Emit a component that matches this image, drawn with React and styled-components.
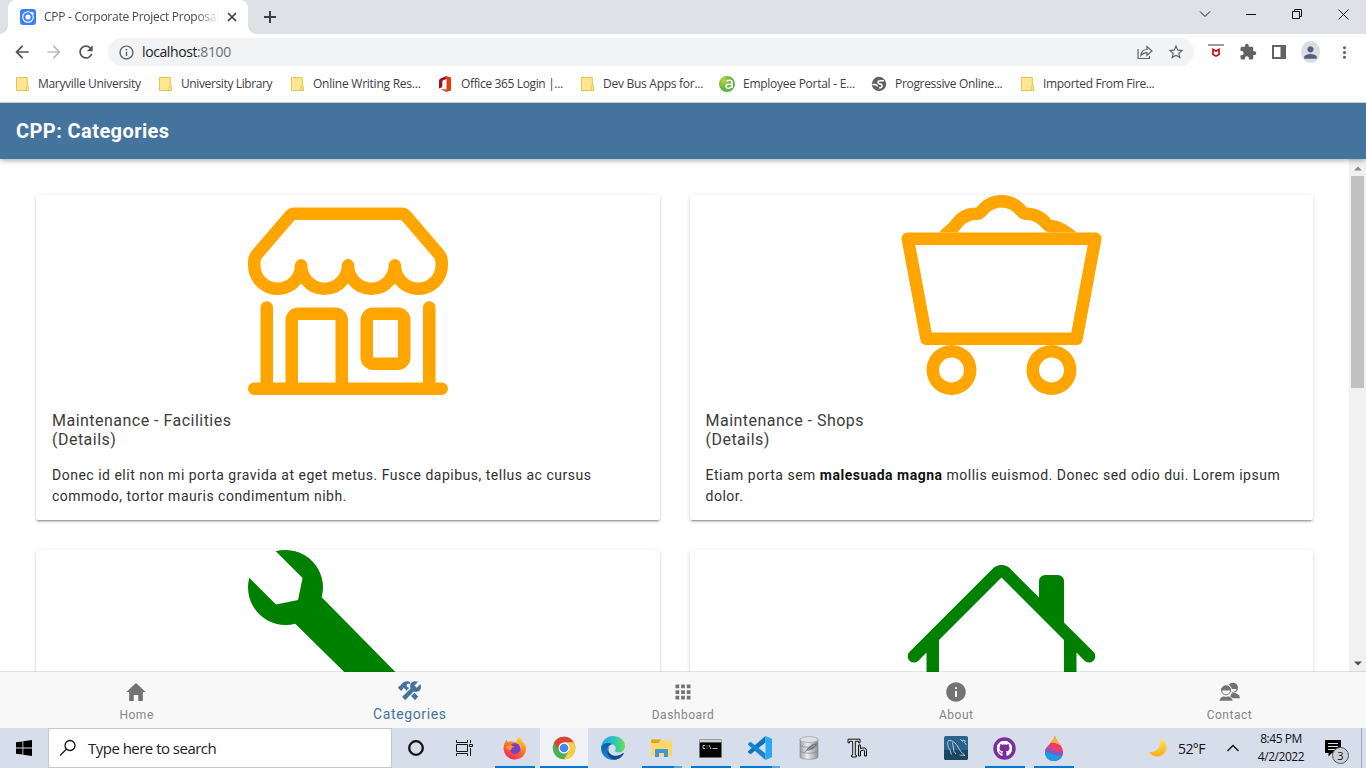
import React from "react";
import styled, { createGlobalStyle } from "styled-components";
import { BsShop, BsMinecartLoaded, BsWrench, BsHouse } from "react-icons/bs";
import { MdArrowBack, MdArrowForward, MdRefresh, MdInfoOutline, MdStarBorder, MdExtension, MdMoreVert, MdPerson } from "react-icons/md";
import { IoMdHome, IoMdApps, IoMdInformationCircle } from "react-icons/io";
import { IoConstructSharp } from "react-icons/io5";
import { FaGithub } from "react-icons/fa";

const Global = createGlobalStyle`
  *{box-sizing:border-box}
  html,body{margin:0;padding:0;height:100%;overflow:hidden}
  body{background:#fff;font-family:"Open Sans","Noto Sans",sans-serif}
  svg{display:block;flex:none}
`;

const Screen = styled.div`width:1366px;height:768px;display:flex;flex-direction:column;overflow:hidden;`;

/* Browser chrome */
const TabStrip = styled.div`height:34px;flex:none;display:flex;background:#dee1e6;padding-left:8px;`;
const Tab = styled.div`
  width:240px;height:34px;background:#fff;border-radius:8px 8px 0 0;display:flex;align-items:center;padding-left:12px;position:relative;
  &::before,&::after{content:"";position:absolute;bottom:0;width:8px;height:8px;}
  &::before{left:-8px;background:radial-gradient(circle at 0 0,transparent 7.5px,#fff 8px);}
  &::after{right:-8px;background:radial-gradient(circle at 100% 0,transparent 7.5px,#fff 8px);}
`;
const TabTitle = styled.div`
  width:174px;margin-left:8px;padding-bottom:1px;overflow:hidden;white-space:nowrap;font-size:12px;letter-spacing:-0.27px;color:#45474b;
  mask-image:linear-gradient(90deg,#000 152px,transparent 176px);
`;
const TabClose = styled.div`margin-left:9px;`;
const NewTab = styled.div`display:flex;align-items:center;margin-left:15px;`;
const WindowButtons = styled.div`margin-left:auto;display:flex;align-items:center;height:28px;`;
const WindowButton = styled.div`width:46px;display:flex;justify-content:center;`;

const Toolbar = styled.div`height:36px;flex:none;display:flex;align-items:center;padding:0 12px 0 14px;background:#fff;color:#5f6368;`;
const NavButton = styled.div`width:16px;margin-right:16px;display:flex;justify-content:center;color:${p => p.$off ? "#babcbe" : "#4f5256"};`;
const Omnibox = styled.div`flex:1;height:28px;border-radius:14px;background:#f1f3f4;display:flex;align-items:center;padding:0 9px 0 10px;margin-left:-2px;`;
const Url = styled.div`margin-left:7px;padding-bottom:1px;font-size:14px;letter-spacing:-0.4px;color:#202124;span{color:#6b6f73;}`;
const OmniActions = styled.div`margin-left:auto;display:flex;align-items:center;gap:14px;`;
const ToolActions = styled.div`display:flex;align-items:center;width:160px;padding-left:14px;gap:${p => p.$gap || 15}px;`;
const Avatar = styled.div`width:22px;height:22px;border-radius:50%;background:#dadde4;color:#56607a;display:flex;align-items:center;justify-content:center;`;
const MoreButton = styled.div`margin-left:auto;`;

const Bookmarks = styled.div`height:33px;flex:none;display:flex;padding:0 0 4px 16px;background:#fff;border-bottom:1px solid #d5d6d8;`;
const Bookmark = styled.div`width:${p => p.$w}px;display:flex;align-items:center;font-size:12px;color:#3c4043;white-space:nowrap;letter-spacing:${p => p.$ls}px;`;
const BookmarkIcon = styled.div`width:${p => p.$iw}px;display:flex;flex:none;`;
const BookmarkName = styled.span`padding-bottom:2px;`;

/* App */
const AppHeader = styled.header`
  height:56px;flex:none;background:#44739e;color:#fff;display:flex;align-items:center;padding-left:16px;z-index:1;
  font:700 20px Roboto,sans-serif;letter-spacing:.42px;
  box-shadow:0 2px 4px -1px rgba(0,0,0,.2),0 4px 5px 0 rgba(0,0,0,.06),0 1px 6px 0 rgba(0,0,0,.1);
`;
const Body = styled.div`flex:1;min-height:0;display:flex;`;
const Content = styled.main`flex:1;overflow:hidden;padding:36px;`;
const Cards = styled.div`display:grid;grid-template-columns:1fr 1fr;gap:29.6px 30px;`;
const Card = styled.article`
  height:325.4px;background:#fff;border-radius:2px;overflow:hidden;font-family:Roboto,sans-serif;
  box-shadow:0 3px 1px -2px rgba(0,0,0,.2),0 2px 2px 0 rgba(0,0,0,.14),0 1px 5px 0 rgba(0,0,0,.12);
`;
const CardArt = styled.div`height:200px;display:flex;justify-content:center;color:${p => p.$c};svg{overflow:visible;}path{transform:translateX(${p => p.$dx || 0}px);}`;
const CardTitle = styled.div`padding:16px;font-size:16px;line-height:19.2px;letter-spacing:.48px;color:#3c3c3c;`;
const CardText = styled.p`margin:0;padding:0 16px 13px;font-size:14px;line-height:21px;letter-spacing:.5px;color:#303030;b{font-weight:700;color:#111}`;
const Scrollbar = styled.div`width:17px;background:#f1f1f1;display:flex;flex-direction:column;align-items:center;justify-content:space-between;padding:7px 0 6px;`;
const ScrollTrack = styled.div`flex:1;width:13px;padding-top:5px;`;
const Thumb = styled.div`height:212px;background:#c1c1c1;`;
const AppTabs = styled.nav`height:56px;flex:none;display:flex;background:#f8f8f8;box-shadow:0 -1px 0 rgba(0,0,0,.1);z-index:1;font-family:Roboto,sans-serif;`;
const AppTab = styled.div`
  flex:1;display:flex;flex-direction:column;align-items:center;padding-top:${p => p.$on ? 7 : 8}px;color:${p => p.$on ? "#44739e" : "#737373"};
  svg{margin-right:1px;}
  span{font-size:${p => p.$on ? 14 : 12}px;line-height:16px;margin-top:${p => p.$on ? 4 : 3}px;letter-spacing:${p => p.$on ? .6 : .5}px;color:${p => p.$on ? "#44739e" : "#858585"};}
`;

/* Taskbar */
const Taskbar = styled.footer`height:40px;flex:none;background:#d7deeb;display:flex;align-items:stretch;`;
const Start = styled.div`width:48px;display:flex;align-items:center;justify-content:center;`;
const Search = styled.div`width:344px;background:#fff;border:1px solid #c5c7ca;display:flex;align-items:center;padding-left:10px;font-size:15px;letter-spacing:-.52px;color:#222;gap:11px;`;
const Task = styled.div`
  width:${p => p.$w || 49}px;display:flex;align-items:center;justify-content:center;position:relative;background:${p => p.$on ? "#eff1f7" : "transparent"};
  margin-left:${p => p.$ml || 0}px;
`;
const Running = styled.div`
  position:absolute;bottom:0;height:2px;left:${p => p.$full ? 0 : 4.5}px;right:${p => p.$full ? 0 : 4.5}px;
  background:${p => p.$stack ? "linear-gradient(90deg,#0078d7 32px,#5aa5e0 32px)" : "#0078d7"};
`;
const Tray = styled.div`margin-left:auto;display:flex;align-items:center;color:#111;`;
const Temp = styled.div`width:29px;margin:0 20px 0 10px;font-size:14px;letter-spacing:-.6px;white-space:nowrap;`;
const Clock = styled.div`width:60px;margin-left:12px;text-align:center;font-size:12px;line-height:18px;letter-spacing:-.45px;`;
const Notice = styled.div`position:relative;margin-left:14px;width:36px;height:40px;padding-top:12px;`;
const Count = styled.div`position:absolute;left:7px;top:19px;width:17px;height:17px;border-radius:50%;border:1px solid #555;background:#cdd0d6;font-size:11px;line-height:15px;text-align:center;`;
const ShowDesktop = styled.div`width:5px;height:40px;border-left:1px solid #a3a9b4;`;

const Folder = () => (
  <svg width="13" height="15" viewBox="0 0 13 15"><path d="M.5.5h10.800v8.800h1v4.200H.5z" fill="#ffe693" stroke="#e8c44c" /><path d="M10 13.500V10.500q0-1.200 1.200-1.200t1.200 1.200v3z" fill="#ffe693" stroke="#e8c44c" /></svg>
);
const Office = () => (
  <svg width="14" height="16" viewBox="0 0 14 16"><path d="M8.500 0L13 1.600v12.800L8.500 16z" fill="#e0400a" /><path d="M8.500 0L2.500 2.600Q1 3.400 1 5v6.500q0 1.200 1 .8l1.500-.7q.8-.4.800-1.300V5.500q0-1 .9-1.300L8.500 3z" fill="#9c1420" /><path d="M3 13.200l5.500 2.800v-2.800z" fill="#c33b3b" /></svg>
);
const Portal = () => (
  <svg width="16" height="16" viewBox="0 0 16 16"><defs><radialGradient id="pg" cx=".3" cy=".3"><stop offset="0" stopColor="#c9cf3c" /><stop offset="1" stopColor="#5cb544" /></radialGradient></defs><circle cx="8" cy="8" r="8" fill="url(#pg)" /><path d="M7.500 5q5-2 5.500 1v6M13 8.300c-4-.3-6 .4-6 2.200 0 2.600 5 2.300 6-.6" fill="none" stroke="#fff" strokeWidth="1.600" /></svg>
);
const Globe = () => (
  <svg width="16" height="16" viewBox="0 0 16 16"><circle cx="8" cy="8" r="7.200" fill="#5f6368" /><path d="M13 4.800H9.500C7.700 4.800 7 5.500 7 6.500s1 1.300 2.200 1.500 2 .8 1.800 2.200-1.400 1.800-3 1.500M1.500 8.500l3.500.3q1.500.3 1.200 1.800" fill="none" stroke="#fff" strokeWidth="1.500" /></svg>
);
const bookmarks = [
  { t: "Maryville University", w: 143, ls: -0.32, I: Folder },
  { t: "University Library", w: 132, ls: -0.38, I: Folder },
  { t: "Online Writing Res...", w: 147, ls: -0.24, I: Folder },
  { t: "Office 365 Login |...", w: 143, iw: 23, ls: -0.36, I: Office },
  { t: "Dev Bus Apps for...", w: 138, ls: -0.27, I: Folder },
  { t: "Employee Portal - E...", w: 152, iw: 24, ls: -0.26, I: Portal },
  { t: "Progressive Online...", w: 150, iw: 24, ls: -0.32, I: Globe },
  { t: "Imported From Fire...", w: 140, ls: -0.33, I: Folder },
];

const Favicon = () => (
  <svg width="16" height="16" viewBox="0 0 16 16"><rect width="16" height="16" rx="3" fill="#3880ff" /><circle cx="8" cy="8" r="5.300" fill="none" stroke="#fff" strokeWidth="1.100" /><circle cx="8" cy="8" r="2.600" fill="#fff" /><circle cx="12.200" cy="4.200" r="1.300" fill="#fff" /></svg>
);
const Stroke = ({ w = 16, h = 16, d, s = 1, c = "#111", fill = "none" }) => (
  <svg width={w} height={h} viewBox={`0 0 ${w} ${h}`}><path d={d} fill={fill} stroke={c} strokeWidth={s} /></svg>
);
const Contacts = () => (
  <svg width="24" height="24" viewBox="0 0 24 24">
    <circle cx="16" cy="7.800" r="5" fill="#737373" /><path d="M12 9h7.500q-.8 3-3.500 3.200z" fill="#f8f8f8" />
    <path d="M13 17l1.500-3.500 3.500-.8 4 2.300 1 3.200H16z" fill="#737373" />
    <circle cx="9" cy="10.300" r="6" fill="#f8f8f8" /><circle cx="9" cy="10.300" r="4.500" fill="#f8f8f8" stroke="#737373" strokeWidth="1" />
    <path d="M4 10.500C3.800 4 14.200 4 14 10.500z" fill="#737373" />
    <path d="M1.800 21L3.800 17.300l3-1.200q2.200 1 4.400 0l3 1.200 2 3.700z" fill="#737373" stroke="#f8f8f8" strokeWidth=".6" />
  </svg>
);

const Firefox = () => (
  <svg width="24" height="24" viewBox="0 0 24 24"><defs><linearGradient id="ff" x1=".8" y1="0" x2=".25" y2="1"><stop offset="0" stopColor="#ffe13d" /><stop offset=".45" stopColor="#ff7b26" /><stop offset="1" stopColor="#f5225d" /></linearGradient></defs>
    <path d="M16 .5c2.200 1.500 3 3.300 3.300 5 2.500 1.500 4.300 5 3.600 8.500C22 20 17.500 23.500 12 23.500S1.500 19.500.7 14C.1 9.600 1.700 6.300 4 3.500L4.300 6l3.500-.8C9.500 5 10.500 5.500 11 6l3-.5C14 3.500 14.700 2 16 .5z" fill="url(#ff)" />
    <circle cx="12" cy="12.500" r="5.500" fill="#7542c4" /><path d="M3 11c3-2.500 5.500-2.500 8.500 0-2.500.2-3.500 1.500-3.200 3.200-2.300 0-4.300-1-5.300-3.200z" fill="#ff9330" /><path d="M12 7c4 0 5.500 3 5 6 2-2 1.500-6-1-8z" fill="#ffb22e" /></svg>
);
const Chrome = () => (
  <svg width="24" height="24" viewBox="0 0 24 24"><circle cx="12" cy="12" r="11.300" fill="#4caf50" /><path d="M2.200 6.350A11.300 11.300 0 0 1 21.800 6.350H12L7.100 14.800z" fill="#db4437" /><path d="M21.800 6.350A11.300 11.300 0 0 1 12 23.300L16.900 14.800 12 6.350z" fill="#ffcd40" /><path d="M2.200 6.350L7.100 14.800 12 12z" fill="#db4437" /><circle cx="12" cy="12" r="5.500" fill="#fff" /><circle cx="12" cy="12" r="4.300" fill="#4285f4" /></svg>
);
const Edge = () => (
  <svg width="24" height="24" viewBox="0 0 24 24"><defs><linearGradient id="e1"><stop offset="0" stopColor="#249fe0" /><stop offset=".5" stopColor="#2cc1c5" /><stop offset="1" stopColor="#66df4d" /></linearGradient><linearGradient id="e2" x2="0" y2="1"><stop offset="0" stopColor="#0b5aa5" /><stop offset="1" stopColor="#1691e0" /></linearGradient></defs>
    <path d="M.1 11C1 4.500 6 0 12 0c7 0 12 4.500 12 10 0 4-3 6.500-6.500 6.500-3 0-4-1.300-3.300-2.300C16 11 13 8 9 8 5 8 1.500 9 .1 11z" fill="url(#e1)" /><path d="M.1 11C2 7.500 7 6 11 8c-3 1-5.200 4-4.500 8 .7 4 3.500 7 7.500 7.800C6 25-.7 19 .1 11z" fill="url(#e2)" /><path d="M10 9.500c-5 3-2.500 9.500 3.500 10.200 3.500.4 6.500-1 8.500-2.700.7-.3 1 .3.700.7-2 4-6 6.300-9.700 6C5 22 4 12 10 9.500z" fill="#114a8b" /></svg>
);
const Explorer = () => (
  <svg width="22" height="20" viewBox="0 0 22 20"><path d="M1 1.500h9v4H0V2.500q0-1 1-1z" fill="#e5a50a" /><path d="M9 2.500h11q1 0 1 1V18H0V5h8z" fill="#ffd869" /><path d="M4 19v-7q0-1 1-1h11q1 0 1 1v7h-4v-4H8v4z" fill="#3c97db" /></svg>
);
const Terminal = () => (
  <svg width="23" height="19" viewBox="0 0 23 19"><rect width="23" height="19" rx="1" fill="#9a9da0" /><rect x="1" y="1" width="21" height="2" fill="#d2d4d6" /><rect x=".7" y="3.500" width="21.600" height="14.800" fill="#050505" /><path d="M6 6.500H4v3h2M8 6.700v.8M8 8.700v.8M10 6l2 4M13.500 9.500h5" stroke="#eee" fill="none" strokeWidth=".8" /></svg>
);
const Code = () => (
  <svg width="24" height="24" viewBox="0 0 24 24"><path d="M17.500 0v6.600L2.500 18.300.3 16.500q-.7-.7 0-1.500z" fill="#0f72b8" /><path d="M17.500 24v-6.600L2.500 5.700.3 7.500q-.7.7 0 1.500z" fill="#1484cf" /><path d="M17.500 0L24 2.800v18.400L17.500 24z" fill="#29a9f2" /></svg>
);
const Database = () => (
  <svg width="20" height="24" viewBox="0 0 20 24"><defs><linearGradient id="db"><stop offset="0" stopColor="#9b9da3" /><stop offset=".4" stopColor="#eceef2" /><stop offset="1" stopColor="#8d9096" /></linearGradient></defs><path d="M1 3v18c0 3 18 3 18 0V3z" fill="url(#db)" stroke="#888" strokeWidth=".6" /><ellipse cx="10" cy="3.500" rx="9" ry="3" fill="#dcdfe4" stroke="#999" strokeWidth=".6" /><path d="M1 9c3 3 15 3 18 0M1 15c3 3 15 3 18 0" fill="none" stroke="#888" strokeWidth=".8" /><path d="M5 18.500C7 13 12 7.500 18.500 7 16 12.500 12 14.500 7.500 15z" fill="#6b6f75" /><path d="M4 19.500C8 15 12 11 16 9" fill="none" stroke="#e3e5e8" strokeWidth=".6" /></svg>
);
const Thonny = () => (
  <svg width="21" height="20" viewBox="0 0 21 20"><path d="M1 1.200h12v3.600h-1.500V3.300H8.300V17h1v2H4.700v-2h1V3.300H2.500v1.500H1z" fill="#e8e8e8" stroke="#111" strokeWidth="1" /><path d="M11.500 7h2v3.500q6-2 6 2V18h-2v-5q0-2-4 0v5h-2z" fill="#ccc" stroke="#111" strokeWidth="1" /></svg>
);
const MySQL = () => (
  <svg width="24" height="24" viewBox="0 0 24 24"><rect width="24" height="24" rx="2" fill="#2a638c" /><path d="M0 14h24v8q0 2-2 2H2q-2 0-2-2z" fill="#1d4461" /><path d="M7.500 18.500L6 14C4 11 3 7 4.500 4.500 8 4 12 7 14 11c2 4 4 6 7 8.500-3-.5-4 0-5.500-.5M8.500 6.500l1.500 9 2 2.500M16.500 3l2 2.500.5-1.500 2.500 1-1 1.500 2 2.500" fill="none" stroke="#c4d5e3" strokeWidth=".9" /></svg>
);
const Drop = () => (
  <svg width="20" height="25" viewBox="0 0 20 25"><defs><clipPath id="dr"><path d="M11 0c1 6 8 9 8 16 0 5-4 9-9 9s-9-4-9-9C1 10 9 7 11 0z" /></clipPath></defs><g clipPath="url(#dr)"><path d="M0 0h20v25H0z" fill="#e93e72" /><path d="M6 0h14v11C15 9 12 6 6 7z" fill="#fdb614" /><path d="M0 12c8-2 10 7 20 3v10H0z" fill="#7d5bc0" /><path d="M0 16c7-1 10 6 20 3v7H0z" fill="#199de5" /></g></svg>
);
const Moon = () => (
  <svg width="20" height="20" viewBox="0 0 20 20"><defs><linearGradient id="mo" x2="0" y2="1"><stop offset="0" stopColor="#ffe45c" /><stop offset="1" stopColor="#ffab0f" /></linearGradient></defs><path d="M11.500 1c5 1.200 8 5 7 9.800C17.300 17 11 20 5.500 17.800 3.500 17 2 15.800 1.200 14 9 15 13.500 8.500 11.500 1z" fill="url(#mo)" /></svg>
);
const GitHub = () => (
  <svg width="23" height="23" viewBox="0 0 23 23"><circle cx="11.500" cy="11.500" r="11.200" fill="#7b2d9e" /><FaGithub x="3.500" y="3.500" size={16} color="#fff" /></svg>
);

const cards = [
  { t: "Maintenance - Facilities", I: BsShop, c: "orange", x: "Donec id elit non mi porta gravida at eget metus. Fusce dapibus, tellus ac cursus commodo, tortor mauris condimentum nibh." },
  { t: "Maintenance - Shops", I: BsMinecartLoaded, c: "orange", dx: 0.04, x: <>Etiam porta sem <b>malesuada magna</b> mollis euismod. Donec sed odio dui. Lorem ipsum dolor.</> },
  { I: BsWrench, c: "green" },
  { I: BsHouse, c: "green", dx: 0.04 },
];
const appTabs = [
  { t: "Home", I: IoMdHome }, { t: "Categories", I: IoConstructSharp, on: true }, { t: "Dashboard", I: IoMdApps },
  { t: "About", I: IoMdInformationCircle }, { t: "Contact", I: Contacts },
];
const tasks = [
  { I: Firefox, run: true, ml: 2 }, { I: Chrome, run: true, on: true, w: 48, ml: 1 }, { I: Edge }, { I: Explorer, run: true, stack: true }, { I: Terminal, run: true },
  { I: Code, run: true, stack: true }, { I: Database }, { I: Thonny }, { I: MySQL, ml: 49 }, { I: GitHub, run: true }, { I: Drop, run: true },
];

export default function App() {
  return (
    <>
      <Global />
      <Screen>
        <TabStrip>
          <Tab>
            <Favicon />
            <TabTitle>CPP - Corporate Project Proposal</TabTitle>
            <TabClose><Stroke w={10} h={10} s={1.7} c="#3c4043" d="M1 1l8 8M9 1L1 9" /></TabClose>
          </Tab>
          <NewTab><Stroke w={14} h={14} s={2} c="#3c4043" d="M7 1v12M1 7h12" /></NewTab>
          <WindowButtons>
            <WindowButton><Stroke w={12} h={8} d="M1 1.500l5 5 5-5" /></WindowButton>
            <WindowButton><Stroke w={10} h={10} d="M0 5.500h10" /></WindowButton>
            <WindowButton><Stroke w={10} h={10} d="M.5 2.500h7v7h-7zM2.500 2.500v-2h7v7h-2" /></WindowButton>
            <WindowButton><Stroke w={11} h={11} d="M.5.5l10 10M10.500.5l-10 10" /></WindowButton>
          </WindowButtons>
        </TabStrip>
        <Toolbar>
          <NavButton><MdArrowBack size={20} /></NavButton>
          <NavButton $off><MdArrowForward size={20} /></NavButton>
          <NavButton><MdRefresh size={20} /></NavButton>
          <Omnibox>
            <MdInfoOutline size={17} />
            <Url>localhost<span>:8100</span></Url>
            <OmniActions>
              <Stroke w={16} h={16} s={1.2} c="#5f6368" d="M1 5v9.500h11.500V12M4 11.500c.3-4 2.500-6 6-6V2.500L15 7l-5 4.500V8.600c-3 0-4.500.9-6 2.900z" />
              <MdStarBorder size={18} />
            </OmniActions>
          </Omnibox>
          <ToolActions>
            <svg width="16" height="16" viewBox="0 0 16 16"><path d="M0 1h16" stroke="#9b9c9f" strokeWidth="2" /><path d="M5 5.500v5l3 1.500 3-1.500v-5L8 7z" fill="#fff" stroke="#c01818" strokeWidth="1.700" /></svg>
            <MdExtension size={18} />
            <svg width="14" height="14" viewBox="0 0 14 14"><path d="M1 1h12v12H1z" fill="#fff" stroke="#5f6368" strokeWidth="2" /><path d="M8.500 1H13v12H8.500z" fill="#5f6368" /></svg>
            <Avatar><MdPerson size={19} /></Avatar>
            <MoreButton><MdMoreVert size={19} /></MoreButton>
          </ToolActions>
        </Toolbar>
        <Bookmarks>
          {bookmarks.map(({ t, w, ls, iw, I }) => (
            <Bookmark key={t} $w={w} $ls={ls}><BookmarkIcon $iw={iw || 22}><I /></BookmarkIcon><BookmarkName>{t}</BookmarkName></Bookmark>
          ))}
        </Bookmarks>
        <AppHeader>CPP: Categories</AppHeader>
        <Body>
          <Content>
            <Cards>
              {cards.map(({ t, I, c, x, dx }, i) => (
                <Card key={i}>
                  <CardArt $c={c} $dx={dx}><I size={200} /></CardArt>
                  {t && <CardTitle>{t}<br />(Details)</CardTitle>}
                  {x && <CardText>{x}</CardText>}
                </Card>
              ))}
            </Cards>
          </Content>
          <Scrollbar>
            <Stroke w={8} h={5} c="none" fill="#8a8a8a" d="M0 4.500L4 .5l4 4z" />
            <ScrollTrack><Thumb /></ScrollTrack>
            <Stroke w={8} h={5} c="none" fill="#505050" d="M0 .5l4 4 4-4z" />
          </Scrollbar>
        </Body>
        <AppTabs>
          {appTabs.map(({ t, I, on }) => <AppTab key={t} $on={on}><I size={on ? 23 : 24} /><span>{t}</span></AppTab>)}
        </AppTabs>
        <Taskbar>
          <Start><svg width="16" height="16" viewBox="0 0 16 16"><path d="M0 2.300l6.500-.9v6.200H0zM7.300 1.200L16 0v7.600H7.300zM0 8.400h6.500v6.200L0 13.700zM7.300 8.400H16V16l-8.700-1.200z" /></svg></Start>
          <Search><Stroke w={18} h={18} s={1.3} d="M16 6.500a5 5 0 1 1-10 0 5 5 0 0 1 10 0zM7.300 10.300L1 16.600" />Type here to search</Search>
          <Task $w={48}><Stroke w={18} h={18} s={2.3} d="M15.800 9A6.800 6.800 0 1 1 2.200 9a6.800 6.800 0 0 1 13.600 0z" /></Task>
          <Task $w={48}><Stroke w={17} h={16} d="M.5 0v2.500h11V0M.5 4.500h11v7H.5zM.5 16v-2.500h11V16M14.500 0v3M14.500 8v8M13.500 4.500h3v2h-3z" /></Task>
          {tasks.map(({ I, run, on, stack, ml, w }, i) => (
            <Task key={i} $on={on} $ml={ml} $w={w}><I />{run && <Running $full={on} $stack={stack} />}</Task>
          ))}
          <Tray>
            <Moon /><Temp>52°F</Temp>
            <Stroke w={12} h={8} s={1.3} d="M.5 7L6 1.500 11.500 7" />
            <Clock>8:45 PM<br />4/2/2022</Clock>
            <Notice>
              <svg width="16" height="17" viewBox="0 0 16 17"><path d="M0 0h16v13H7l-3.500 3.500V13H0z" /><path d="M3 3.500h10M3 6.500h10M3 9.500h7" stroke="#d7deeb" /></svg>
              <Count>3</Count>
            </Notice>
            <ShowDesktop />
          </Tray>
        </Taskbar>
      </Screen>
    </>
  );
}
